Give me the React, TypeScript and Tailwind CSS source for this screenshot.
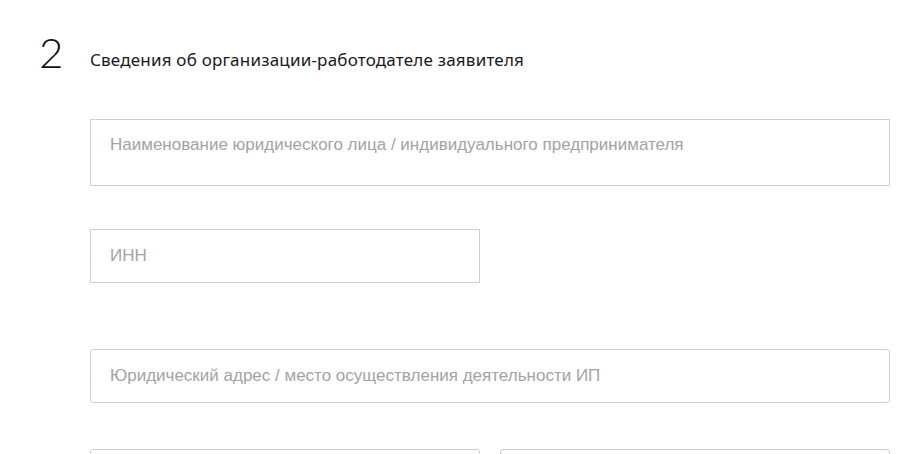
const FIELD =
  "border border-[#cfcfcf] bg-white px-[19px] text-[17px] text-[#9b9b9b] outline-none placeholder:text-[#a3a3a3] font-['Liberation_Sans',Arial,sans-serif]"

export default function App() {
  return (
    <div className="h-[454px] w-[916px] overflow-hidden bg-white">
      <section className="flex pt-[29px]">
        <div className="w-[90px] shrink-0 pl-[39px] font-['Lato',sans-serif] text-[42px] font-light leading-[46px] text-[#111]">
          2
        </div>
        <div className="w-[800px]">
          <h2 className="mt-[20px] font-['Noto_Sans',sans-serif] text-[17px] leading-[22px] tracking-[0.2px] text-[#1a1a1a]">
            Сведения об организации-работодателе заявителя
          </h2>

          <div className="mt-[48px] flex flex-col">
            <textarea
              className={`${FIELD} h-[67px] w-full resize-none pt-[14px] leading-[22px]`}
              placeholder="Наименование юридического лица / индивидуального предпринимателя"
            />
            <input
              className={`${FIELD} mt-[43px] h-[54px] w-[390px]`}
              placeholder="ИНН"
            />
            <input
              className={`${FIELD} mt-[66px] h-[54px] w-full rounded-[3px]`}
              placeholder="Юридический адрес / место осуществления деятельности ИП"
            />
            <div className="mt-[46px] flex gap-[20px]">
              <input className={`${FIELD} h-[54px] w-[390px] rounded-[3px]`} />
              <input className={`${FIELD} h-[54px] w-[390px] rounded-[3px]`} />
            </div>
          </div>
        </div>
      </section>
    </div>
  )
}
